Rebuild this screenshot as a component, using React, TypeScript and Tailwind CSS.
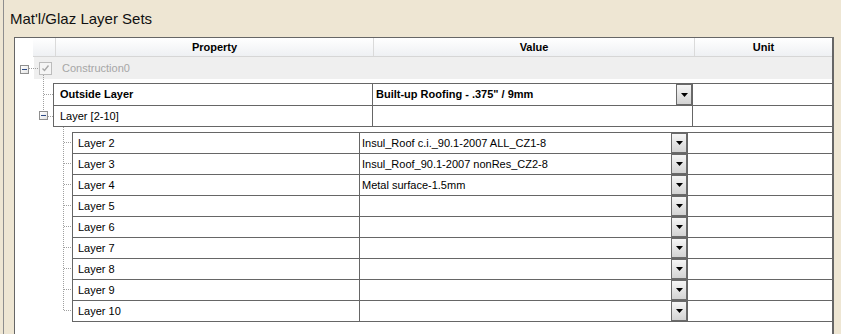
import React from 'react';

const LINE = 'border-[#666666]';

function Expander() {
  return (
    <div className="w-[9px] h-[9px] border border-[#8f8f8f] bg-gradient-to-br from-white to-[#e4e4e4] flex items-center justify-center">
      <div className="w-[5px] h-[1px] bg-[#2c4a86]" />
    </div>
  );
}

function DisabledCheck() {
  return (
    <div className="w-[13px] h-[13px] border border-[#bcbcbc] bg-[#f5f5f5] flex items-center justify-center">
      <svg width="9" height="9" viewBox="0 0 9 9">
        <path d="M1.5 4.5 L3.5 6.5 L7.5 1.5" fill="none" stroke="#a8a8a8" strokeWidth="1.4" />
      </svg>
    </div>
  );
}

function DropBtn() {
  return (
    <div className="w-[16px] h-full border border-[#6a6a6a] bg-gradient-to-b from-[#f6f6f6] to-[#d3d3d3] flex items-center justify-center">
      <svg width="7" height="4" viewBox="0 0 7 4">
        <path d="M0 0h7L3.5 4z" fill="#000" />
      </svg>
    </div>
  );
}

const layers = [
  { name: 'Layer 2', value: 'Insul_Roof c.i._90.1-2007 ALL_CZ1-8' },
  { name: 'Layer 3', value: 'Insul_Roof_90.1-2007 nonRes_CZ2-8' },
  { name: 'Layer 4', value: 'Metal surface-1.5mm' },
  { name: 'Layer 5', value: '' },
  { name: 'Layer 6', value: '' },
  { name: 'Layer 7', value: '' },
  { name: 'Layer 8', value: '' },
  { name: 'Layer 9', value: '' },
  { name: 'Layer 10', value: '' },
];

// dotted tree connectors, coordinates relative to the grid's inner box
function TreeLines() {
  const stubs = layers.map((_, i) => 104.5 + i * 21);
  return (
    <svg className="absolute left-0 top-0" width="80" height="290">
      <g stroke="#a0a0a0" strokeWidth="1" strokeDasharray="1 1" fill="none">
        <path d="M14 30.5H24" />
        <path d="M28.5 37V73" />
        <path d="M29 56.5H38" />
        <path d="M33 78.5H38" />
        <path d="M48.5 89V273" />
        {stubs.map((y) => (
          <path key={y} d={`M49 ${y}H57`} />
        ))}
      </g>
    </svg>
  );
}

export default function App() {
  return (
    <div className="w-[841px] h-[334px] overflow-hidden bg-[#eee6d3] text-[11px] text-black font-['Liberation_Sans',Arial,sans-serif]">
      <div className="ml-[3px] h-full border-l border-[#8e8e8e] flex flex-col">
        <div className="h-[37px] pl-[6px] pt-[10px] text-[15px] leading-[18px] text-[#111]">Mat'l/Glaz Layer Sets</div>

        <div className={`relative ml-[10px] mr-[7px] flex-1 bg-white border-l border-t border-r-2 ${LINE}`}>
          {/* header */}
          <div className="h-[19px] flex">
            <div className="w-[18px]" />
            <div className="flex-1 flex font-bold bg-gradient-to-b from-white to-[#eef0f3] border-b border-[#d6d6d6]">
              <div className="w-[23px] border-r border-[#dadada]" />
              <div className="w-[318px] border-r border-[#dadada] flex items-center justify-center">Property</div>
              <div className="w-[321px] border-r border-[#dadada] flex items-center justify-center">Value</div>
              <div className="flex-1 flex items-center justify-center">Unit</div>
            </div>
          </div>

          {/* Construction0 */}
          <div className="h-[22px] flex">
            <div className="w-[19px] flex items-center pl-[5px] pt-[2px]">
              <Expander />
            </div>
            <div className="flex-1 bg-[#efefef] flex items-center pl-[5px]">
              <DisabledCheck />
              <span className="ml-[10px] text-[#a6a6a6]">Construction0</span>
            </div>
          </div>

          {/* outside layer + group */}
          <div className={`ml-[38px] mt-[4px] border-t border-l ${LINE}`}>
            <div className={`h-[22px] flex border-b ${LINE}`}>
              <div className={`w-[319px] pl-[6px] font-bold flex items-center border-r ${LINE}`}>Outside Layer</div>
              <div className="w-[303px] pl-[3px] font-bold flex items-center">Built-up Roofing - .375" / 9mm</div>
              <DropBtn />
              <div className={`flex-1 border-l ${LINE}`} />
            </div>
            <div className={`h-[21px] flex border-b ${LINE}`}>
              <div className={`w-[319px] pl-[6px] flex items-center border-r ${LINE}`}>Layer [2-10]</div>
              <div className="w-[319px]" />
              <div className={`flex-1 border-l ${LINE}`} />
            </div>
          </div>

          {/* child layers */}
          <div className={`ml-[57px] mt-[5px] border-t border-l ${LINE}`}>
            {layers.map((l) => (
              <div key={l.name} className={`h-[21px] flex border-b ${LINE}`}>
                <div className={`w-[287px] pl-[5px] flex items-center border-r ${LINE}`}>{l.name}</div>
                <div className="w-[311px] pl-[2px] flex items-center">{l.value}</div>
                <DropBtn />
                <div className={`flex-1 border-l ${LINE}`} />
              </div>
            ))}
          </div>

          {/* expander for Layer [2-10] sits on the tree line */}
          <div className="absolute left-[24px] top-[73px]">
            <Expander />
          </div>
          <TreeLines />
        </div>
      </div>
    </div>
  );
}
